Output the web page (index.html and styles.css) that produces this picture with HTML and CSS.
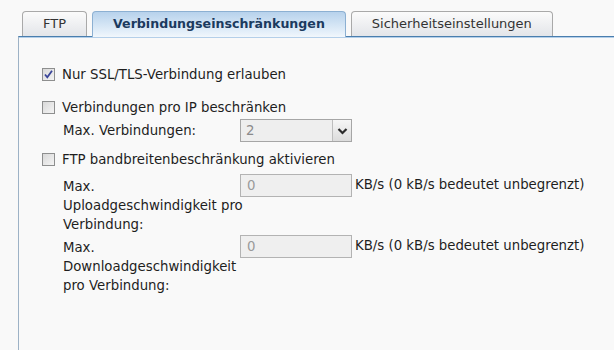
FILE: index.html
```html
<!DOCTYPE html>
<html lang="de">
<head>
<meta charset="utf-8">
<title>FTP</title>
<link rel="stylesheet" href="styles.css">
</head>
<body>
<div class="tabs">
  <div class="tab">FTP</div>
  <div class="tab active">Verbindungseinschränkungen</div>
  <div class="tab">Sicherheitseinstellungen</div>
</div>
<div class="panel">
  <div class="row r1">
    <span class="cb"><svg width="11" height="11" viewBox="0 0 11 11"><path d="M2 5.5 L4.3 8.3 L9 1.8" fill="none" stroke="#3a4599" stroke-width="1.8"/></svg></span>
    <span>Nur SSL/TLS-Verbindung erlauben</span>
  </div>
  <div class="row r2">
    <span class="cb"></span>
    <span>Verbindungen pro IP beschränken</span>
  </div>
  <div class="field r3">
    <span class="lbl single">Max. Verbindungen:</span>
    <span class="select"><span class="val">2</span><span class="btn"><svg width="11" height="8" viewBox="0 0 11 8"><path d="M1.5 2 L5.5 6 L9.5 2" fill="none" stroke="#2b2b2b" stroke-width="2.2"/></svg></span></span>
  </div>
  <div class="row r4">
    <span class="cb"></span>
    <span>FTP bandbreitenbeschränkung aktivieren</span>
  </div>
  <div class="field r5">
    <span class="lbl">Max.<br>Uploadgeschwindigkeit pro<br>Verbindung:</span>
    <span class="input">0</span>
    <span class="unit">KB/s (0 kB/s bedeutet unbegrenzt)</span>
  </div>
  <div class="field r6">
    <span class="lbl">Max.<br>Downloadgeschwindigkeit<br>pro Verbindung:</span>
    <span class="input">0</span>
    <span class="unit">KB/s (0 kB/s bedeutet unbegrenzt)</span>
  </div>
</div>
</body>
</html>
```
FILE: styles.css
```css
html, body {
  margin: 0;
  height: 100%;
}
body {
  background: #f9f9f9;
  font-family: "DejaVu Sans", Verdana, sans-serif;
  font-size: 13.3px;
  color: #1e1e1e;
  overflow: hidden;
}
.tabs {
  display: flex;
  align-items: flex-end;
  gap: 5px;
  padding: 11px 0 0 22px;
  height: 25px;
}
.tab {
  box-sizing: border-box;
  height: 25px;
  line-height: 24px;
  padding: 0 20px;
  border: 1px solid #a9a9a9;
  border-bottom: none;
  border-radius: 4px 4px 0 0;
  background: linear-gradient(#fbfbfb, #e3e5e9);
  color: #333;
  font-size: 13px;
}
.tab.active {
  height: 26px;
  margin-bottom: -1px;
  padding: 0 20px;
  border-color: #8cb0d2;
  background: linear-gradient(#b7d2ec, #e7f1fa 85%, #f2f7fc);
  color: #1b3a5e;
  font-weight: bold;
  font-size: 12.6px;
}
.panel {
  margin-left: 18px;
  border-top: 1px solid #4a7eae;
  border-left: 1px solid #9db2c6;
  box-shadow: inset 0 1px 0 #b4cfe9;
  height: calc(100vh - 36px);
  padding: 28px 0 0 23px;
  box-sizing: border-box;
}
.row {
  display: flex;
  align-items: center;
  gap: 7px;
  height: 19px;
  line-height: 19px;
}
.cb {
  box-sizing: border-box;
  width: 13px;
  height: 13px;
  border: 1px solid #8e8f8f;
  background: linear-gradient(135deg, #d9d9d9, #f4f4f4);
  display: flex;
  align-items: center;
  justify-content: center;
}
.r2 { margin-top: 14px; }
.r3 { margin-top: 2px; }
.r4 { margin-top: 8px; }
.r5 { margin-top: 5px; }
.r6 { margin-top: 1px; }
.field {
  display: flex;
  align-items: flex-start;
  margin-left: 21px;
  line-height: 19px;
}
.lbl {
  width: 170px;
  margin-right: 7px;
  padding-top: 3px;
  white-space: nowrap;
}
.lbl.single {
  padding-top: 2px;
}
.select {
  box-sizing: border-box;
  width: 112px;
  height: 23px;
  border: 1px solid #a6a6a6;
  background: #eeeeee;
  display: flex;
  color: #8a8a8a;
}
.select .val {
  flex: 1;
  padding-left: 5px;
  line-height: 21px;
}
.select .btn {
  width: 18px;
  border-left: 1px solid #bdbdbd;
  background: linear-gradient(#f6f6f6, #dcdcdc);
  display: flex;
  align-items: center;
  justify-content: center;
}
.input {
  box-sizing: border-box;
  width: 112px;
  height: 23px;
  border: 1px solid #b3b3b3;
  background: #efefef;
  color: #9a9a9a;
  padding-left: 6px;
  line-height: 22px;
}
.unit {
  margin-left: 3px;
  padding-top: 1px;
}
```
